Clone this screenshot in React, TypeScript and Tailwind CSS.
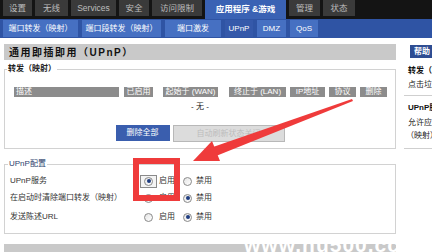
import React from 'react';

const FONT = '"Liberation Sans", "Noto Sans CJK SC", sans-serif';

const topTabs = [
    { label: '设置', w: 'w-[29px]' },
    { label: '无线', w: 'w-[33px]' },
    { label: 'Services', w: 'w-[45px]' },
    { label: '安全', w: 'w-[30px]' },
    { label: '访问限制', w: 'w-[50px]' },
    { label: '应用程序 &游戏', w: 'w-[81px]', active: true },
    { label: '管理', w: 'w-[31px]' },
    { label: '状态', w: 'w-[32px]' },
];

const subTabs = [
    { label: '端口转发（映射）', w: 'w-[75px]' },
    { label: '端口段转发（映射）', w: 'w-[79px]' },
    { label: '端口激发', w: 'w-[56px]' },
    { label: 'UPnP', w: 'w-[28px]', active: true },
    { label: 'DMZ', w: 'w-[29px]' },
    { label: 'QoS', w: 'w-[28px]' },
];

function Radio({ checked }: { checked: boolean }) {
    return (
        <span className="w-[9px] h-[9px] rounded-full border border-[#8a8a8a] bg-gradient-to-br from-[#e4e4e4] to-white flex items-center justify-center">
            {checked && <span className="w-[4px] h-[4px] rounded-full bg-[#1f3d80]" />}
        </span>
    );
}

function RadioRow({ label, on, focus, className }: { label: string; on: boolean; focus?: boolean; className: string }) {
    return (
        <div className={`flex items-center h-[14px] ${className}`}>
            <span className="w-[135px] pl-[5px] text-[8px] text-[#333]">{label}</span>
            <span className={`flex items-center h-[13px] px-[3px] border ${focus ? 'border-[#8a8a8a] bg-[#f4f4f4]' : 'border-transparent'}`}>
                <Radio checked={on} />
            </span>
            <span className="ml-[2px] text-[8px] text-[#333]">启用</span>
            <span className="ml-[8px]"><Radio checked={!on} /></span>
            <span className="ml-[4px] text-[8px] text-[#333]">禁用</span>
        </div>
    );
}

export default function App() {
    return (
        <div className="relative w-[432px] h-[252px] overflow-hidden bg-white" style={{ fontFamily: FONT }}>
            {/* Top tabs */}
            <div className="flex gap-[3px] pl-[3px] h-[19px] bg-[#141414]">
                {topTabs.map(t => (
                    <div
                        key={t.label}
                        className={`${t.w} flex items-center justify-center text-[8.5px] whitespace-nowrap ${t.active ? 'h-[19px] bg-[#3a62b4] text-white font-bold' : 'h-[16px] bg-[#3a3a3a] text-[#bdbdbd]'}`}
                    >
                        {t.label}
                    </div>
                ))}
            </div>

            {/* Sub tabs */}
            <div className="flex gap-[4px] pl-[3px] pt-[1px] h-[19px] bg-[#2f54a4]">
                {subTabs.map(t => (
                    <div
                        key={t.label}
                        className={`${t.w} h-[17px] flex items-center justify-center text-[8px] text-white whitespace-nowrap ${t.active ? 'bg-[#3559aa]' : 'bg-[#4670c2]'}`}
                    >
                        {t.label}
                    </div>
                ))}
            </div>

            <div className="flex">
                {/* Main column */}
                <div className="w-[392px] ml-[4px] shrink-0">
                    <div className="mt-[6px] h-[16px] bg-[#c9c9c9] flex items-center pl-[5px] text-[10px] font-bold tracking-[1.5px] text-[#111]">
                        通用即插即用（UPnP）
                    </div>

                    <fieldset className="mt-[3px] border border-[#d2d2d2] pb-[6px]">
                        <legend className="ml-[2px] px-[1px] text-[8px] leading-[12px] font-bold text-[#222]">转发（映射）</legend>
                        <div className="flex pt-[12px] h-[22px] text-[8px] text-white">
                            <div className="ml-[9px] w-[105px] h-[10px] bg-[#8c8c8c] flex items-center pl-[2px]">描述</div>
                            <div className="ml-[5px] w-[29px] h-[10px] bg-[#8c8c8c] flex items-center justify-center">已启用</div>
                            <div className="ml-[10px] w-[55px] h-[10px] bg-[#8c8c8c] flex items-center justify-center whitespace-nowrap">起始于 (WAN)</div>
                            <div className="ml-[11px] w-[57px] h-[10px] bg-[#8c8c8c] flex items-center justify-center whitespace-nowrap">终止于 (LAN)</div>
                            <div className="ml-[4px] w-[35px] h-[10px] bg-[#8c8c8c] flex items-center justify-center">IP地址</div>
                            <div className="ml-[4px] w-[27px] h-[10px] bg-[#8c8c8c] flex items-center justify-center">协议</div>
                            <div className="ml-[4px] w-[27px] h-[10px] bg-[#8c8c8c] flex items-center justify-center">删除</div>
                        </div>
                        <div className="mt-[4px] h-[12px] flex items-center justify-center text-[8px] text-[#222]">- 无 -</div>
                        <div className="mt-[12px] flex justify-center gap-[3px]">
                            <div className="w-[54px] h-[16px] bg-[#3a5eae] flex items-center justify-center text-[8px] text-white">删除全部</div>
                            <div className="w-[112px] h-[17px] bg-[#dcdcdc] border border-[#b8b8b8] flex items-center justify-center text-[8px] text-[#bcbcbc]">自动刷新状态关闭</div>
                        </div>
                    </fieldset>

                    <fieldset className="mt-[9px] border border-[#d2d2d2] pb-[9px]">
                        <legend className="ml-[3px] px-[1px] text-[8px] leading-[12px] text-[#2c3f6e]">UPnP配置</legend>
                        <RadioRow className="mt-[4px]" label="UPnP服务" on focus />
                        <RadioRow className="mt-[3px]" label="在启动时清除端口转发（映射）" on={false} />
                        <RadioRow className="mt-[5px]" label="发送陈述URL" on={false} />
                    </fieldset>

                    <div className="mt-[10px] h-[12px] bg-[#c9c9c9]" />
                </div>

                {/* Help column */}
                <div className="ml-[8px] flex-1 overflow-hidden whitespace-nowrap">
                    <div className="mt-[7px] ml-[6px] h-[13px] bg-[#2e4d92] flex items-center pl-[4px] text-[8px] font-bold text-white">帮助</div>
                    <div className="mt-[7px] pl-[4px] text-[8px] font-bold text-[#111]">转发（映射）</div>
                    <div className="mt-[2px] pl-[4px] text-[8px] text-[#222]">点击垃圾桶图标删除</div>
                    <div className="mt-[4px] border-t border-[#cfcfcf]" />
                    <div className="mt-[6px] pl-[4px] text-[8px] font-bold text-[#111]">UPnP服务</div>
                    <div className="mt-[3px] pl-[4px] text-[8px] text-[#222]">允许应用程序自动</div>
                    <div className="mt-[1px] pl-[2px] text-[8px] text-[#222]">（映射）</div>
                    <div className="mt-[6px] border-t border-[#cfcfcf]" />
                </div>
            </div>

            {/* Annotation: red box and arrow */}
            <div className="absolute left-[133px] top-[158px] w-[47px] h-[43px] border-[6px] border-[#ef3b3b]" />
            <svg className="absolute inset-0 pointer-events-none" width="432" height="252" viewBox="0 0 432 252">
                <polygon points="352,99 353,101 216,156 213,147" fill="#ef3b3b" />
                <polygon points="193,161 212,141 220,161" fill="#ef3b3b" />
            </svg>

            {/* Watermark */}
            <div className="absolute left-[244px] top-[234px] text-[21px] leading-none font-bold text-white tracking-[1px]">
                www.hu500.cc
            </div>
        </div>
    );
}
